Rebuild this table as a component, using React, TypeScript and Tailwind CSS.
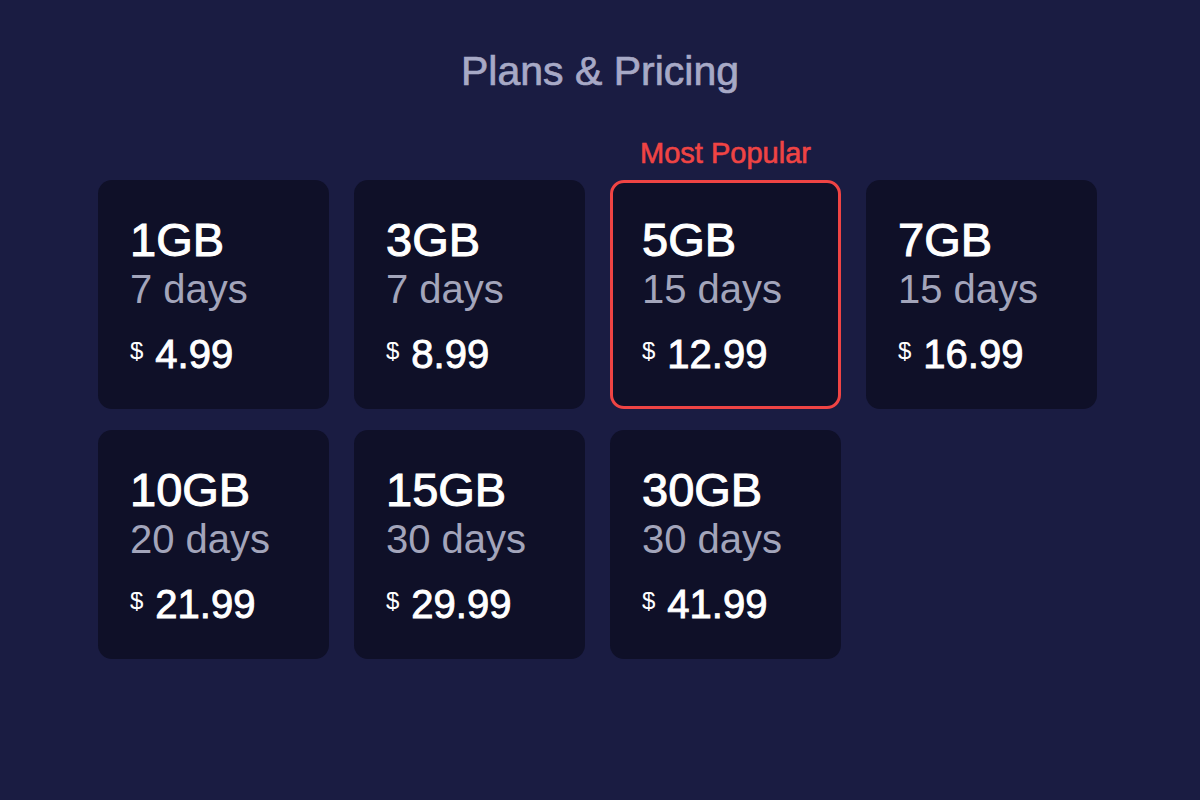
const plans = [
  { size: "1GB", days: "7 days", price: "4.99" },
  { size: "3GB", days: "7 days", price: "8.99" },
  { size: "5GB", days: "15 days", price: "12.99", popular: true },
  { size: "7GB", days: "15 days", price: "16.99" },
  { size: "10GB", days: "20 days", price: "21.99" },
  { size: "15GB", days: "30 days", price: "29.99" },
  { size: "30GB", days: "30 days", price: "41.99" },
];

function PlanCard({ size, days, price, popular }: { size: string; days: string; price: string; popular?: boolean }) {
  return (
    <div
      className={
        popular
          ? "relative h-[229px] rounded-[14px] border-[3px] border-[#ef4444] bg-[#0f1028] pl-[29px] pt-[33px]"
          : "relative h-[229px] rounded-[14px] bg-[#0f1028] pl-8 pt-9"
      }
    >
      {popular && (
        <div className="absolute left-1/2 top-[-44px] -translate-x-1/2 whitespace-nowrap text-[29px] leading-none text-[#ef4444] [-webkit-text-stroke:0.6px_#ef4444]">
          Most Popular
        </div>
      )}
      <div className="text-[47px] leading-none text-white [-webkit-text-stroke:1px_#fff]">{size}</div>
      <div className="mt-[6px] text-[40px] leading-none text-[#a3a5bb]">{days}</div>
      <div className="mt-[25px] flex items-start text-white">
        <span className="mt-[5px] text-[24px] leading-none">$</span>
        <span className="ml-3 text-[40px] leading-none [-webkit-text-stroke:0.9px_#fff]">{price}</span>
      </div>
    </div>
  );
}

export default function App() {
  return (
    <div className="flex h-[800px] w-[1200px] flex-col items-center bg-[#1a1c42] pt-[51px] font-['Liberation_Sans',Arial,sans-serif]">
      <h1 className="text-[41px] leading-none text-[#a7a9c6] [-webkit-text-stroke:0.7px_#a7a9c6]">Plans &amp; Pricing</h1>
      <div className="mr-[5px] mt-[88px] grid grid-cols-[repeat(4,231px)] gap-x-[25px] gap-y-[21px]">
        {plans.map((p) => (
          <PlanCard key={p.size} {...p} />
        ))}
      </div>
    </div>
  );
}
